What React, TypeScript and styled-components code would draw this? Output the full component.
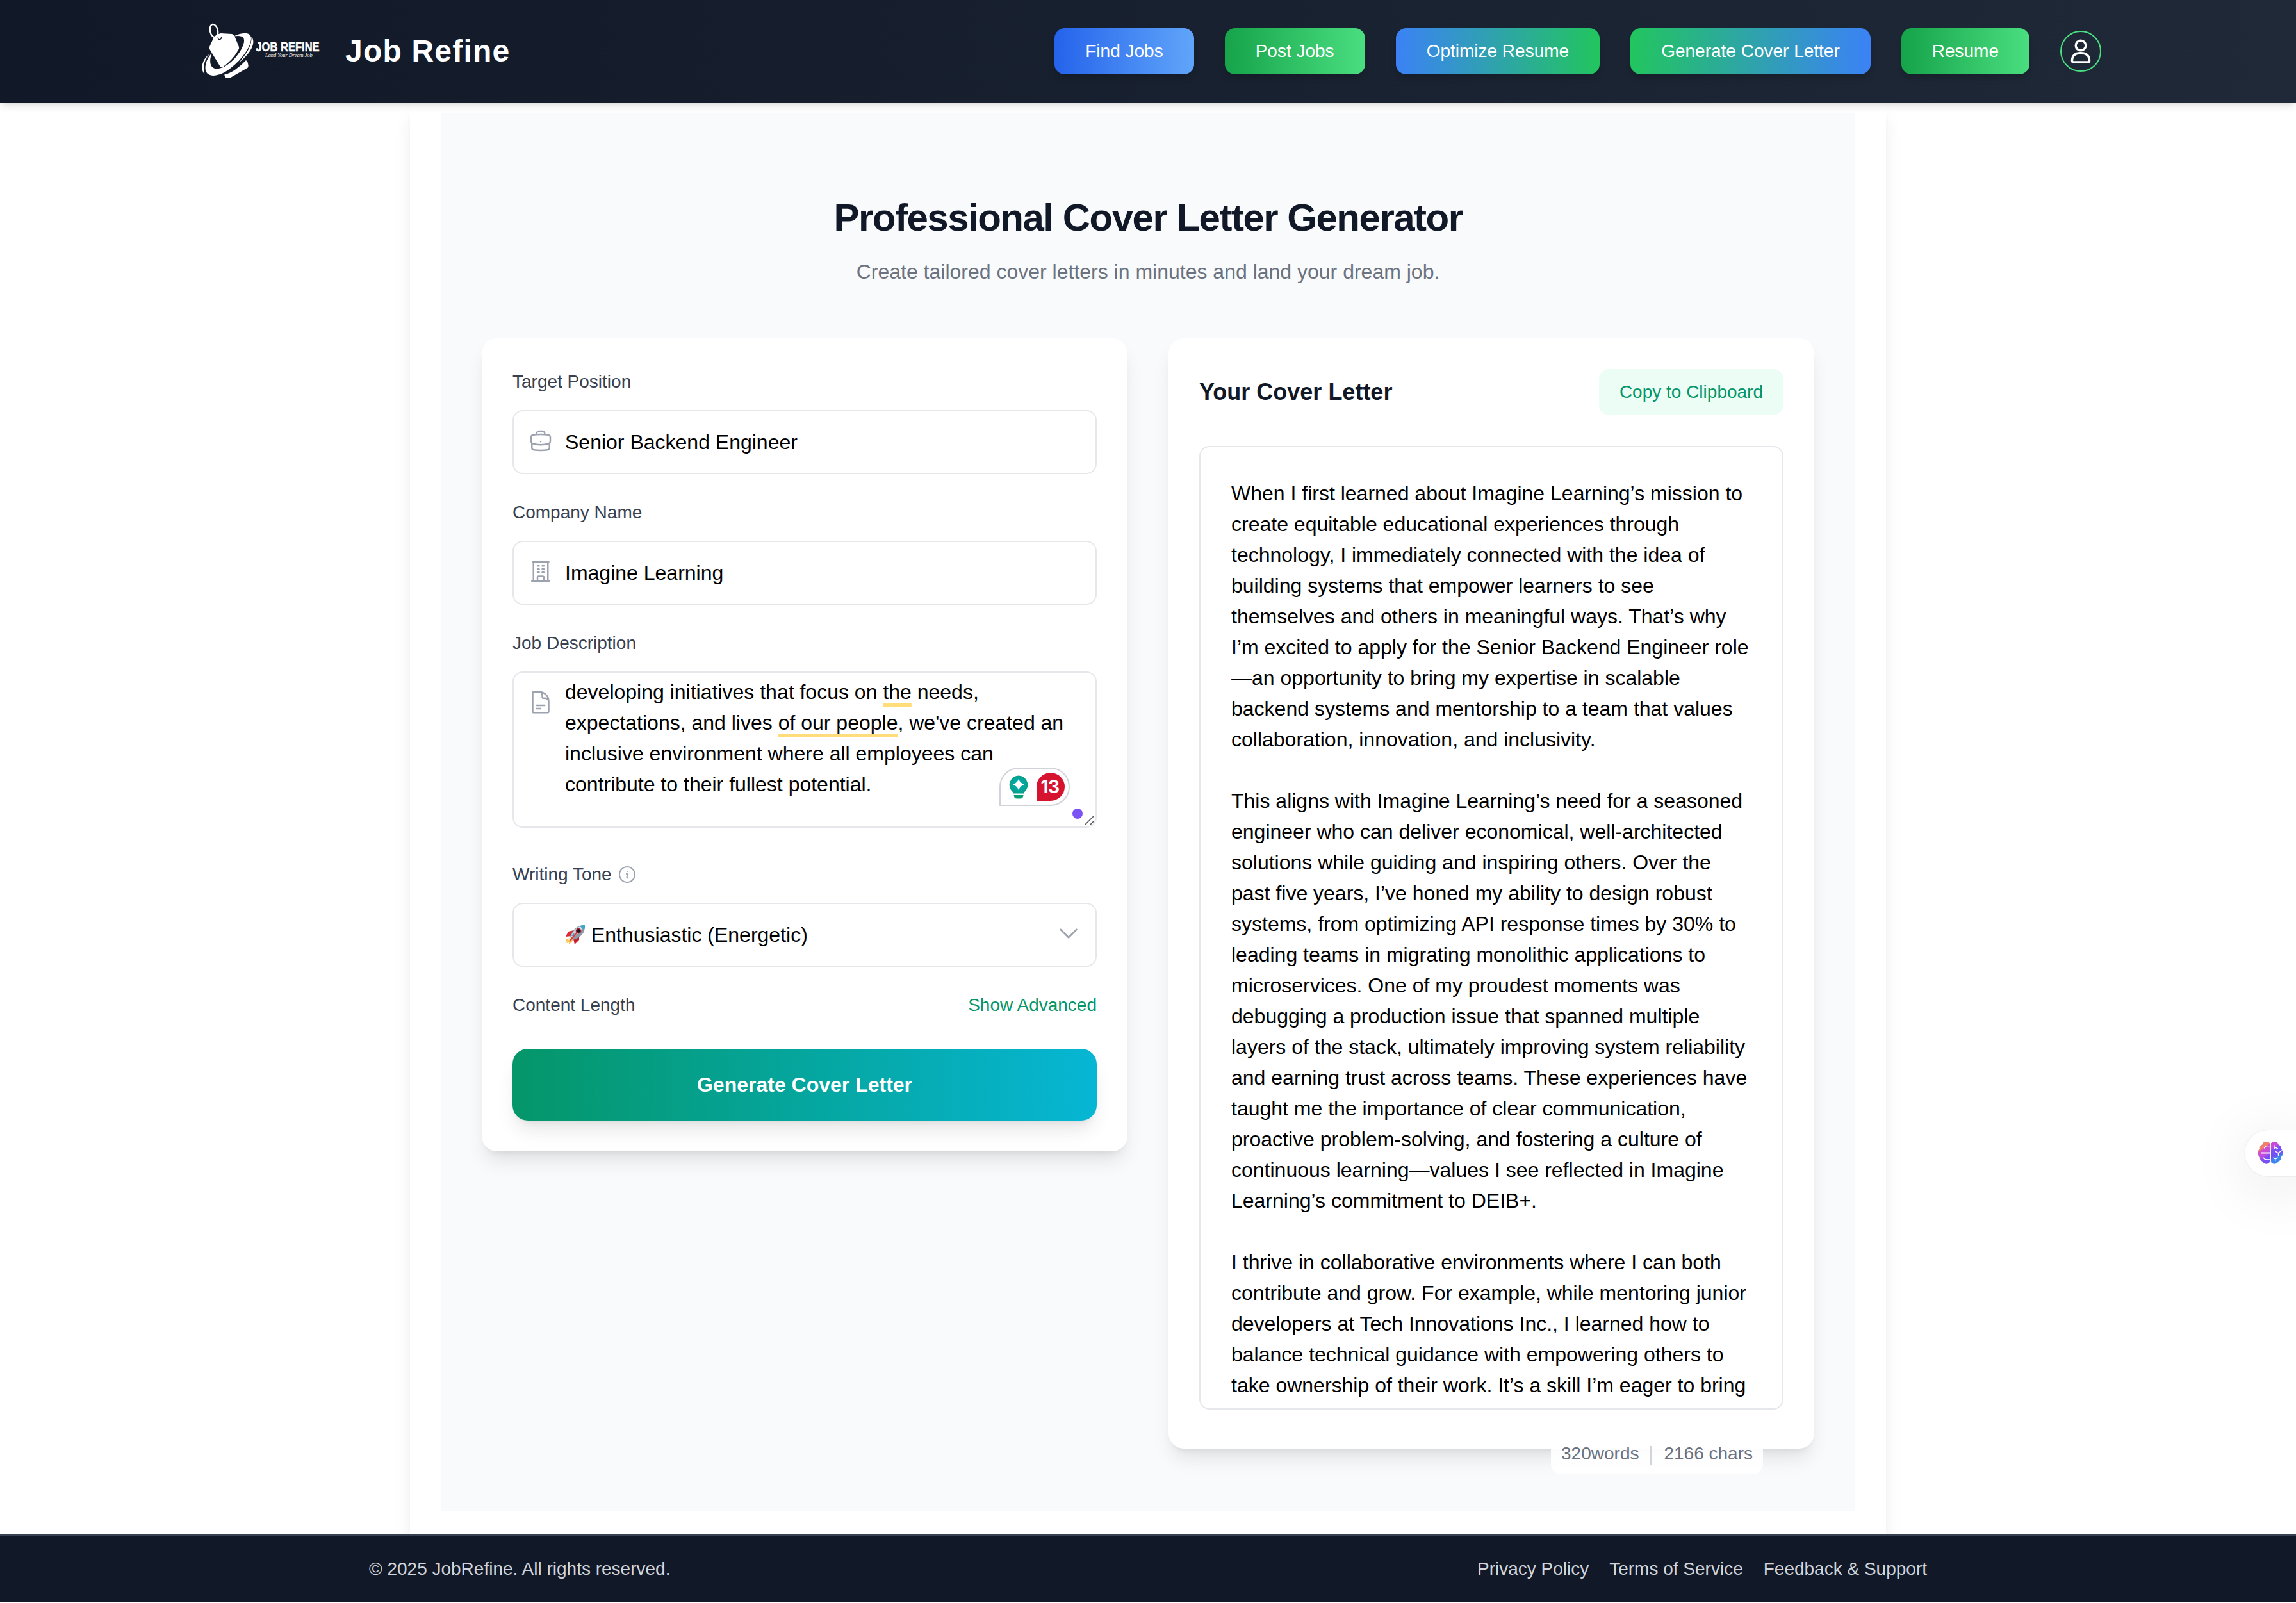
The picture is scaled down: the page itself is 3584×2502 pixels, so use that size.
import React from "react";
import styled, { createGlobalStyle } from "styled-components";
import {
  HiOutlineBriefcase,
  HiOutlineBuildingOffice,
  HiOutlineChevronDown,
  HiOutlineDocumentText,
  HiOutlineInformationCircle,
} from "react-icons/hi2";

const shadowMd = "0 8px 12px -2px rgba(0, 0, 0, 0.1), 0 4px 8px -4px rgba(0, 0, 0, 0.1)";
const shadowLg = "0 20px 30px -6px rgba(0, 0, 0, 0.1), 0 8px 12px -8px rgba(0, 0, 0, 0.1)";

const GlobalStyle = createGlobalStyle`
  * {
    box-sizing: border-box;
    margin: 0;
    padding: 0;
  }
  body {
    background: #ffffff;
    font-family: "Liberation Sans", Arial, Helvetica, sans-serif;
    font-size: 32px;
    line-height: 48px;
    color: #000000;
  }
  button {
    border: none;
    font-family: inherit;
  }
`;

const Page = styled.div`
  width: 3584px;
  height: 2501px;
  display: flex;
  flex-direction: column;
  overflow: hidden;
`;

const Header = styled.header`
  position: relative;
  z-index: 2;
  flex: none;
  height: 160px;
  padding: 0 304px;
  display: flex;
  align-items: center;
  justify-content: space-between;
  background: linear-gradient(to right, #111827, #1f2937);
  box-shadow: ${shadowMd};
`;

const Brand = styled.div`
  display: flex;
  align-items: center;
  gap: 35px;
  color: #ffffff;
  svg {
    width: 200px;
    height: 110px;
    overflow: visible;
  }
  h1 {
    font-size: 48px;
    line-height: 64px;
    font-weight: 700;
    letter-spacing: 1.2px;
  }
`;

const Nav = styled.nav`
  display: flex;
  align-items: center;
  gap: 48px;
`;

const NavButton = styled.button<{ $from: string; $to: string }>`
  height: 72px;
  padding: 16px 48px;
  border-radius: 16px;
  background: linear-gradient(to right, ${({ $from }) => $from}, ${({ $to }) => $to});
  box-shadow: ${shadowMd};
  color: #ffffff;
  font-size: 28px;
  line-height: 40px;
  white-space: nowrap;
`;

const Avatar = styled.div`
  width: 64px;
  height: 64px;
  border: 2px solid #4ade80;
  border-radius: 50%;
  display: flex;
  align-items: center;
  justify-content: center;
`;

const Main = styled.main`
  flex: 1;
  width: 2304px;
  margin: 0 auto;
  padding: 16px 48px 0;
  background: #ffffff;
  box-shadow: ${shadowLg};
`;

const Panel = styled.section`
  height: 2182px;
  padding: 128px 64px 96px;
  background: #f9fafb;
`;

const Heading = styled.div`
  text-align: center;
  margin-bottom: 80px;
  h2 {
    font-size: 60px;
    line-height: 72px;
    font-weight: 700;
    letter-spacing: -1.5px;
    color: #111827;
    margin-bottom: 24px;
  }
  p {
    color: #6b7280;
  }
`;

const Columns = styled.div`
  display: grid;
  grid-template-columns: 1fr 1fr;
  gap: 64px;
  align-items: start;
`;

const Card = styled.div`
  padding: 48px;
  border-radius: 24px;
  background: #ffffff;
  box-shadow: ${shadowLg};
`;

const Field = styled.div<{ $space?: number }>`
  margin-bottom: ${({ $space = 40 }) => $space}px;
`;

const Label = styled.div`
  display: flex;
  align-items: center;
  gap: 8px;
  margin-bottom: 24px;
  font-size: 28px;
  line-height: 40px;
  color: #374151;
  svg {
    width: 32px;
    height: 32px;
    color: #9ca3af;
  }
`;

const Control = styled.div<{ $height?: number }>`
  position: relative;
  height: ${({ $height = 100 }) => $height}px;
  padding: 24px 32px 24px 80px;
  border: 2px solid #e5e7eb;
  border-radius: 16px;
  display: flex;
  align-items: center;
  white-space: pre;
`;

const TextArea = styled(Control)`
  display: block;
  padding-top: 6px;
  padding-bottom: 0;
`;

const FieldIcon = styled.span<{ $right?: boolean }>`
  position: absolute;
  top: 26px;
  ${({ $right }) => ($right ? "right: 22px;" : "left: 22px;")}
  width: 40px;
  height: 40px;
  color: #9ca3af;
  svg {
    display: block;
    width: 40px;
    height: 40px;
  }
`;

const Hint = styled.span`
  text-decoration: underline #ffdd7b 6px;
  text-underline-offset: 6px;
  text-decoration-skip-ink: none;
`;

const Rocket = styled.svg`
  width: 32px;
  height: 32px;
  flex: none;
`;

const Checker = styled.div`
  position: absolute;
  right: 40px;
  bottom: 32px;
  width: 110px;
  height: 60px;
  padding: 0 6px 0 13px;
  border: 2px solid #d1d3d9;
  border-radius: 30px 30px 30px 0;
  background: #ffffff;
  display: flex;
  align-items: center;
  justify-content: space-between;
`;

const CheckerCount = styled.span`
  width: 44px;
  height: 44px;
  padding-right: 2px;
  border-radius: 22px 22px 22px 0;
  background: #d6142f;
  color: #ffffff;
  font-family: Inter, sans-serif;
  font-size: 28px;
  line-height: 44px;
  font-weight: 700;
  letter-spacing: -0.5px;
  text-align: center;
`;

const Dot = styled.span`
  position: absolute;
  right: 20px;
  bottom: 12px;
  width: 16px;
  height: 16px;
  border-radius: 50%;
  background: #7b52f5;
`;

const Resizer = styled.svg`
  position: absolute;
  right: 2px;
  bottom: 1px;
  width: 16px;
  height: 16px;
`;

const LengthRow = styled.div`
  display: flex;
  justify-content: space-between;
  margin-bottom: 48px;
  font-size: 28px;
  line-height: 40px;
  color: #374151;
  a {
    color: #059669;
  }
`;

const GenerateButton = styled.button`
  display: block;
  width: 100%;
  height: 112px;
  border-radius: 24px;
  background: linear-gradient(to right, #059669, #06b6d4);
  box-shadow: ${shadowLg};
  color: #ffffff;
  font-size: 32px;
  line-height: 48px;
  font-weight: 700;
`;

const LetterCard = styled(Card)`
  position: relative;
  padding-bottom: 61px;
`;

const LetterHeader = styled.div`
  display: flex;
  align-items: center;
  justify-content: space-between;
  margin-bottom: 48px;
  h3 {
    font-size: 36px;
    line-height: 56px;
    font-weight: 700;
    color: #111827;
  }
`;

const CopyButton = styled.button`
  height: 72px;
  padding: 16px 32px;
  border-radius: 16px;
  background: #ecfdf5;
  color: #059669;
  font-size: 28px;
  line-height: 40px;
`;

const Letter = styled.div`
  height: 1504px;
  padding: 48px 48px 0;
  border: 2px solid #e5e7eb;
  border-radius: 16px;
  overflow: hidden;
  white-space: pre;
`;

const Counter = styled.div`
  position: absolute;
  right: 80px;
  bottom: -40px;
  height: 64px;
  padding: 0 16px 1px;
  border-radius: 16px;
  background: rgba(255, 255, 255, 0.9);
  display: flex;
  align-items: center;
  gap: 18px;
  font-size: 28px;
  line-height: 40px;
  color: #6b7280;
  i {
    width: 3px;
    height: 30px;
    margin-top: 7px;
    background: #d1d5db;
  }
`;

const Footer = styled.footer`
  position: relative;
  flex: none;
  height: 106px;
  padding: 32px 576px;
  border-top: 2px solid #374151;
  background: #111827;
  display: flex;
  justify-content: space-between;
  font-size: 28px;
  line-height: 40px;
  color: #d1d5db;
`;

const FooterLinks = styled.div`
  display: flex;
  gap: 32px;
`;

const SideTab = styled.div`
  position: fixed;
  top: 1764px;
  right: -20px;
  width: 100px;
  height: 72px;
  padding: 17px 0 0 20px;
  border-radius: 36px 0 0 36px;
  background: #ffffff;
  box-shadow: 0 0 2px rgba(0, 0, 0, 0.16), 0 16px 96px rgba(15, 30, 60, 0.1);
  svg {
    display: block;
    width: 40px;
    height: 37px;
  }
`;

const navItems = [
  { label: "Find Jobs", from: "#2563eb", to: "#60a5fa" },
  { label: "Post Jobs", from: "#16a34a", to: "#4ade80" },
  { label: "Optimize Resume", from: "#3b82f6", to: "#22c55e" },
  { label: "Generate Cover Letter", from: "#22c55e", to: "#3b82f6" },
  { label: "Resume", from: "#16a34a", to: "#4ade80" },
];

const letter = `When I first learned about Imagine Learning’s mission to
create equitable educational experiences through
technology, I immediately connected with the idea of
building systems that empower learners to see
themselves and others in meaningful ways. That’s why
I’m excited to apply for the Senior Backend Engineer role
—an opportunity to bring my expertise in scalable
backend systems and mentorship to a team that values
collaboration, innovation, and inclusivity.

This aligns with Imagine Learning’s need for a seasoned
engineer who can deliver economical, well-architected
solutions while guiding and inspiring others. Over the
past five years, I’ve honed my ability to design robust
systems, from optimizing API response times by 30% to
leading teams in migrating monolithic applications to
microservices. One of my proudest moments was
debugging a production issue that spanned multiple
layers of the stack, ultimately improving system reliability
and earning trust across teams. These experiences have
taught me the importance of clear communication,
proactive problem-solving, and fostering a culture of
continuous learning—values I see reflected in Imagine
Learning’s commitment to DEIB+.

I thrive in collaborative environments where I can both
contribute and grow. For example, while mentoring junior
developers at Tech Innovations Inc., I learned how to
balance technical guidance with empowering others to
take ownership of their work. It’s a skill I’m eager to bring`;

const Logo = () => (
  <svg viewBox="0 0 600 330" fill="#ffffff">
    <ellipse cx="90" cy="69" rx="18" ry="31" fill="none" stroke="#ffffff" strokeWidth="7" transform="rotate(-12 90 69)" />
    <path d="M122 81 L174 84 Q182 86 186 93 L207 145 Q209 152 204 159 Q178 206 130 240 Q122 243 118 235 L70 156 Q67 149 70 142 L88 103 Q95 88 122 81 Z" />
    <path d="M109 99 a8 8 0 1 0 14 -2" fill="none" stroke="#161d2c" strokeWidth="4" />
    {/* orbit around the tag */}
    <path d="M180 96 C215 77 262 70 264 103 C265 146 214 213 156 253 C109 286 56 290 50 250 C47 222 61 192 80 175 C68 205 68 244 100 247 C148 250 212 184 229 130 C239 96 216 88 180 96 Z" />
    <path d="M265 95 C290 124 262 174 207 218 C244 174 270 136 265 95 Z" />
    <path d="M72 176 C45 203 38 237 46 272 C25 250 33 200 72 176 Z" />
    <path d="M139 274 C174 268 208 240 239 208 C246 208 250 220 251 235 L248 242 L168 288 C153 295 140 291 139 274 Z" />
    <path d="M67 180 C50 200 40 228 47 262" fill="none" stroke="#161d2c" strokeWidth="2" />
    <text x="286" y="164" fontSize="58" fontWeight="700" textLength="298" lengthAdjust="spacingAndGlyphs" stroke="#ffffff" strokeWidth="1.5" fontFamily="Liberation Sans, sans-serif">
      JOB REFINE
    </text>
    <text x="330" y="191" fontSize="24" fontStyle="italic" textLength="221" lengthAdjust="spacingAndGlyphs" fontFamily="Liberation Serif, serif">
      Land Your Dream Job
    </text>
  </svg>
);

const UserIcon = () => (
  <svg width="40" height="44" viewBox="0 0 40 44" fill="none" stroke="#ffffff" strokeWidth="3.4" strokeLinejoin="round">
    <circle cx="20" cy="13" r="7.8" />
    <path d="M6.5 37 C6.5 28 12 24.8 20 24.8 C28 24.8 33.5 28 33.5 37 Q33.5 39 31.5 39 H8.5 Q6.5 39 6.5 37 Z" />
  </svg>
);

const BulbIcon = () => (
  <svg width="30" height="37" viewBox="0 0 30 37">
    <defs>
      <radialGradient id="bulb">
        <stop offset="0.5" stopColor="#00a9a5" />
        <stop offset="1" stopColor="#0a9f88" />
      </radialGradient>
    </defs>
    <path d="M15 0.5 A14.5 14.5 0 0 1 24 26.2 Q23 27 23 28.5 H7 Q7 27 6 26.2 A14.5 14.5 0 0 1 15 0.5 Z" fill="url(#bulb)" />
    <path d="M15 6 Q17.4 12.1 23.5 14.5 Q17.4 16.9 15 23 Q12.6 16.9 6.5 14.5 Q12.6 12.1 15 6 Z" fill="#ffffff" />
    <path d="M7.5 31 H22.5 Q22.5 36.5 17 36.5 H13 Q7.5 36.5 7.5 31 Z" fill="#0a9f74" />
  </svg>
);

const RocketIcon = () => (
  <Rocket viewBox="0 0 32 32">
    <path d="M9 20 L1 24 L3 26 L0.5 29 L6 28 L6 31 L14 24 Z" fill="#fcbf4e" />
    <path d="M8 20 L3 25 L8 24 L7 29 L12 23 Z" fill="#ffe9a6" />
    <path d="M14 9 L5 11 L1 19 L10 18 Z" fill="#d92b38" />
    <path d="M22 17 L22 24 L15 31 L13 22 Z" fill="#c4202f" />
    <path d="M31 1 C22 0 12 6 8 19 L12 24 C25 21 32 12 31 1 Z" fill="#8d99a3" />
    <path d="M29 2 C20 2 13 9 9 19 L11 21 C20 15 26 9 29 2 Z" fill="#d3dce2" />
    <path d="M31 1 C28 0.6 25 1.4 23 2.4 L29.5 8.5 C30.7 6 31.2 3.4 31 1 Z" fill="#3fa3d1" />
    <circle cx="21" cy="10" r="4.3" fill="#b01b2b" />
    <circle cx="21" cy="10" r="2.8" fill="#101c2c" />
    <path d="M18 13 L8 25" stroke="#e23a45" strokeWidth="2.6" strokeLinecap="round" />
    <path d="M14 14 L11 18" stroke="#3fa3d1" strokeWidth="2" />
  </Rocket>
);

const BrainIcon = () => (
  <svg viewBox="0 0 42 38">
    <defs>
      <linearGradient id="brainLeft" gradientUnits="userSpaceOnUse" x1="2" y1="4" x2="24" y2="34">
        <stop offset="0.26" stopColor="#f0806a" />
        <stop offset="0.3" stopColor="#d050c8" />
        <stop offset="0.55" stopColor="#c04be0" />
        <stop offset="0.68" stopColor="#7a50f5" />
      </linearGradient>
      <linearGradient id="brainRight" gradientUnits="userSpaceOnUse" x1="22" y1="2" x2="40" y2="34">
        <stop offset="0.2" stopColor="#c94ad8" />
        <stop offset="0.34" stopColor="#7a50f5" />
        <stop offset="0.62" stopColor="#7050f5" />
        <stop offset="0.7" stopColor="#3d86f0" />
      </linearGradient>
    </defs>
    <path d="M20 3 Q17 0 13 1 Q9 1 8 5 Q3 7 4 12 Q0 15 1 19 Q0 23 4 26 Q3 31 8 33 Q10 37 14 37 Q18 37 20 34 Z" fill="url(#brainLeft)" />
    <path d="M22 3 Q25 0 29 1 Q33 1 34 5 Q39 7 38 12 Q42 15 41 19 Q42 23 38 26 Q39 31 34 33 Q32 37 28 37 Q24 37 22 34 Z" fill="url(#brainRight)" />
    <g fill="none" stroke="#ffffff" strokeWidth="1.4" strokeLinecap="round">
      <path d="M20 7.5 H14 L11 11" />
      <path d="M20 19 H6" strokeWidth="2" />
      <path d="M20 30 H15 Q11 30 10 27" />
      <path d="M27 12 L29 10 M33 12 L29 10 L28 7" />
      <path d="M30 17 L34 19 M34 23 V19 L40 15" />
      <path d="M26 27 L29 29 L33 27 M29 29 V32" />
    </g>
  </svg>
);

const App = () => {
  return (
    <>
      <GlobalStyle />
      <Page>
        <Header>
          <Brand>
            <Logo />
            <h1>Job Refine</h1>
          </Brand>
          <Nav>
            {navItems.map(({ label, from, to }) => (
              <NavButton key={label} $from={from} $to={to}>
                {label}
              </NavButton>
            ))}
            <Avatar>
              <UserIcon />
            </Avatar>
          </Nav>
        </Header>
        <Main>
          <Panel>
            <Heading>
              <h2>Professional Cover Letter Generator</h2>
              <p>Create tailored cover letters in minutes and land your dream job.</p>
            </Heading>
            <Columns>
              <Card>
                <Field>
                  <Label>Target Position</Label>
                  <Control>
                    <FieldIcon>
                      <HiOutlineBriefcase />
                    </FieldIcon>
                    Senior Backend Engineer
                  </Control>
                </Field>
                <Field>
                  <Label>Company Name</Label>
                  <Control>
                    <FieldIcon>
                      <HiOutlineBuildingOffice />
                    </FieldIcon>
                    Imagine Learning
                  </Control>
                </Field>
                <Field $space={53}>
                  <Label>Job Description</Label>
                  <TextArea $height={244}>
                    <FieldIcon>
                      <HiOutlineDocumentText />
                    </FieldIcon>
                    developing initiatives that focus on <Hint>the</Hint> needs,
                    <br />
                    expectations, and lives <Hint>of our people</Hint>, we've created an
                    <br />
                    inclusive environment where all employees can
                    <br />
                    contribute to their fullest potential.
                    <Checker>
                      <BulbIcon />
                      <CheckerCount>13</CheckerCount>
                    </Checker>
                    <Dot />
                    <Resizer viewBox="0 0 16 16" stroke="#55575c" strokeWidth="1.6">
                      <path d="M1 15 L15 1 M9 15 L15 9" />
                    </Resizer>
                  </TextArea>
                </Field>
                <Field>
                  <Label>
                    Writing Tone <HiOutlineInformationCircle />
                  </Label>
                  <Control>
                    <RocketIcon />
                    {" Enthusiastic (Energetic)"}
                    <FieldIcon $right>
                      <HiOutlineChevronDown />
                    </FieldIcon>
                  </Control>
                </Field>
                <LengthRow>
                  <span>Content Length</span>
                  <a>Show Advanced</a>
                </LengthRow>
                <GenerateButton>Generate Cover Letter</GenerateButton>
              </Card>
              <LetterCard>
                <LetterHeader>
                  <h3>Your Cover Letter</h3>
                  <CopyButton>Copy to Clipboard</CopyButton>
                </LetterHeader>
                <Letter>{letter}</Letter>
                <Counter>
                  <span>320words</span>
                  <i />
                  <span>2166 chars</span>
                </Counter>
              </LetterCard>
            </Columns>
          </Panel>
        </Main>
        <Footer>
          <p>© 2025 JobRefine. All rights reserved.</p>
          <FooterLinks>
            <a>Privacy Policy</a>
            <a>Terms of Service</a>
            <a>Feedback &amp; Support</a>
          </FooterLinks>
        </Footer>
        <SideTab>
          <BrainIcon />
        </SideTab>
      </Page>
    </>
  );
};

export default App;
